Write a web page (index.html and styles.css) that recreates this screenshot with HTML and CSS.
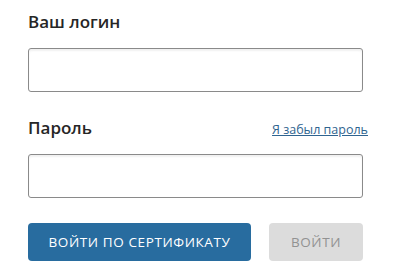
FILE: index.html
```html
<!DOCTYPE html>
<html lang="ru">
<head>
<meta charset="utf-8">
<link rel="stylesheet" href="styles.css">
</head>
<body>
<form class="login">
  <div class="field">
    <div class="label-row"><label class="label">Ваш логин</label></div>
    <input class="input" type="text">
  </div>
  <div class="field">
    <div class="label-row">
      <label class="label">Пароль</label>
      <a class="forgot" href="#">Я забыл пароль</a>
    </div>
    <input class="input" type="password">
  </div>
  <div class="actions">
    <button type="button" class="btn btn-primary">ВОЙТИ ПО СЕРТИФИКАТУ</button>
    <button type="button" class="btn btn-disabled">ВОЙТИ</button>
  </div>
</form>
</body>
</html>
```
FILE: styles.css
```css
html, body {
  margin: 0;
  padding: 0;
  background: #fff;
}
body {
  font-family: "Open Sans", "Noto Sans", sans-serif;
  color: #333;
}
.login {
  width: 335px;
  padding: 10px 0 0 28px;
  display: flex;
  flex-direction: column;
}
.field {
  display: flex;
  flex-direction: column;
}
.field + .field {
  margin-top: 24px;
}
.label-row {
  display: flex;
  justify-content: space-between;
  align-items: baseline;
  height: 24px;
  margin-bottom: 14px;
}
.label {
  font-size: 17px;
  font-weight: 600;
  line-height: 24px;
  color: #262626;
}
.forgot {
  font-size: 12.5px;
  color: #2f6490;
  text-decoration: underline;
  margin-right: -5px;
}
.input {
  box-sizing: border-box;
  height: 44px;
  width: 335px;
  margin: 0;
  border: 1px solid #8a8a8a;
  border-radius: 3px;
  background: #fff;
  box-shadow: inset 0 2px 2px rgba(0,0,0,0.06);
  outline: none;
}
.actions {
  display: flex;
  gap: 18px;
  margin-top: 25px;
}
.btn {
  height: 38px;
  border: none;
  border-radius: 4px;
  font-family: "Open Sans", "Noto Sans", sans-serif;
  font-size: 13.5px;
  letter-spacing: 0.6px;
  padding: 0;
}
.btn-primary {
  width: 223px;
  background: #286c9f;
  color: #fff;
}
.btn-disabled {
  width: 94px;
  background: #dcdcdc;
  color: #929292;
}
```
